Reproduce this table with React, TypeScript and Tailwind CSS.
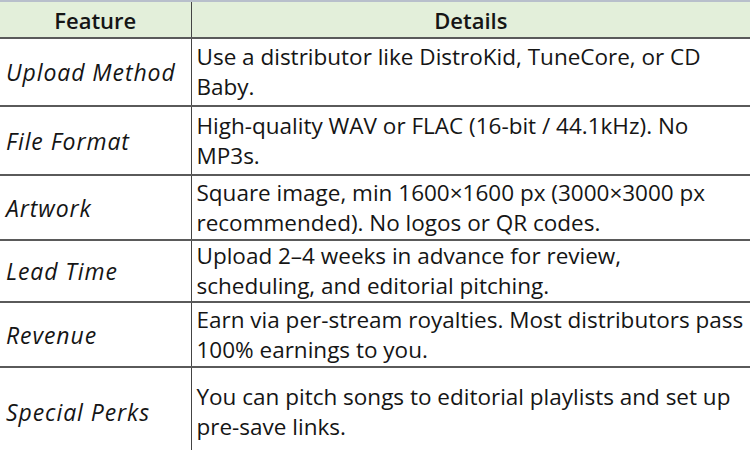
import React from "react";

const rows = [
  { feature: "Upload Method", details: ["Use a distributor like DistroKid, TuneCore, or CD", "Baby."], h: "h-[68px]" },
  { feature: "File Format", details: ["High-quality WAV or FLAC (16-bit / 44.1kHz). No", "MP3s."], h: "h-[69px]" },
  { feature: "Artwork", details: ["Square image, min 1600×1600 px (3000×3000 px", "recommended). No logos or QR codes."], h: "h-[65px]" },
  { feature: "Lead Time", details: ["Upload 2–4 weeks in advance for review,", "scheduling, and editorial pitching."], h: "h-[62px]" },
  { feature: "Revenue", details: ["Earn via per-stream royalties. Most distributors pass", "100% earnings to you."], h: "h-[65px]" },
  { feature: "Special Perks", details: ["You can pitch songs to editorial playlists and set up", "pre-save links."], h: "h-[88px]" },
];

export default function App() {
  return (
    <div className="h-[450px] w-[750px] overflow-hidden bg-white font-['Open_Sans',sans-serif] text-[22.5px] leading-[30px] text-[#151515]">
      <table className="w-full table-fixed border-collapse">
        <thead>
          <tr className="h-[37px] border-t-2 border-t-[#b8bfcb] bg-[#e3efda]">
            <th className="w-[191px] border-r border-r-[#444] text-center text-[22px] font-semibold">Feature</th>
            <th className="text-center text-[22px] font-semibold">Details</th>
          </tr>
        </thead>
        <tbody>
          {rows.map((r) => (
            <tr key={r.feature} className={`${r.h} border-t-2 border-t-[#5a5a5a]`}>
              <td className="border-r border-r-[#444] pl-[6px] align-middle text-[23px] italic tracking-[0.04em] whitespace-nowrap">
                {r.feature}
              </td>
              <td className="pl-[5px] align-middle whitespace-nowrap">
                {r.details[0]}
                <br />
                {r.details[1]}
              </td>
            </tr>
          ))}
        </tbody>
      </table>
    </div>
  );
}
